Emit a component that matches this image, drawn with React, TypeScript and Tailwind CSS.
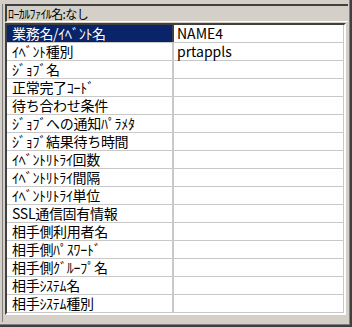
const rows: [string, string][] = [
  ['業務名/ｲﾍﾞﾝﾄ名', 'NAME4'],
  ['ｲﾍﾞﾝﾄ種別', 'prtappls'],
  ['ｼﾞｮﾌﾞ名', ''],
  ['正常完了ｺｰﾄﾞ', ''],
  ['待ち合わせ条件', ''],
  ['ｼﾞｮﾌﾞへの通知ﾊﾟﾗﾒﾀ', ''],
  ['ｼﾞｮﾌﾞ結果待ち時間', ''],
  ['ｲﾍﾞﾝﾄﾘﾄﾗｲ回数', ''],
  ['ｲﾍﾞﾝﾄﾘﾄﾗｲ間隔', ''],
  ['ｲﾍﾞﾝﾄﾘﾄﾗｲ単位', ''],
  ['SSL通信固有情報', ''],
  ['相手側利用者名', ''],
  ['相手側ﾊﾟｽﾜｰﾄﾞ', ''],
  ['相手側ｸﾞﾙｰﾌﾟ名', ''],
  ['相手ｼｽﾃﾑ名', ''],
  ['相手ｼｽﾃﾑ種別', ''],
];

export default function App() {
  return (
    <div
      className="w-[352px] h-[327px] bg-[#d4d0c8] border-r-2 border-b-2 border-[#404040] text-[14px] text-black"
      style={{ fontFamily: '"Noto Sans CJK JP", "Liberation Sans", sans-serif' }}
    >
      <div className="h-full border-r border-b border-[#808080] pt-[4px] pl-[2px] pr-[1px] pb-[2px]">
        <div className="h-full border-l border-[#808080] pl-[2px] flex flex-col">
          {/* file name header */}
          <div className="border-t-2 border-l-2 border-b border-t-[#404040] border-l-[#404040] border-b-white h-[18px] leading-[15px] pl-[1px] text-[12px] tracking-[-0.6px] whitespace-nowrap">
            ﾛｰｶﾙﾌｧｲﾙ名:なし
          </div>
          {/* property grid */}
          <div className="mt-[1px] border-t-2 border-l-2 border-t-[#404040] border-l-[#404040] border-r-2 border-b-2 border-r-white border-b-white mr-[2px]">
            <div className="bg-white">
              {rows.map(([label, value], i) => (
                <div key={label} className="flex h-[18px] border-b border-[#c8c8c8] whitespace-nowrap">
                  <div
                    className={
                      i === 0
                        ? 'w-[167px] bg-[#0a246a] text-white pl-[5px] leading-[17px] tracking-[-0.3px] border-r-2 border-[#404040]'
                        : 'w-[167px] pl-[5px] leading-[17px] tracking-[-0.3px] border-r-2 border-[#c8c8c8]'
                    }
                  >
                    {label}
                  </div>
                  <div className="flex-1 pl-[3px] leading-[17px] border-r border-[#c8c8c8]">{value}</div>
                </div>
              ))}
            </div>
          </div>
        </div>
      </div>
    </div>
  );
}
